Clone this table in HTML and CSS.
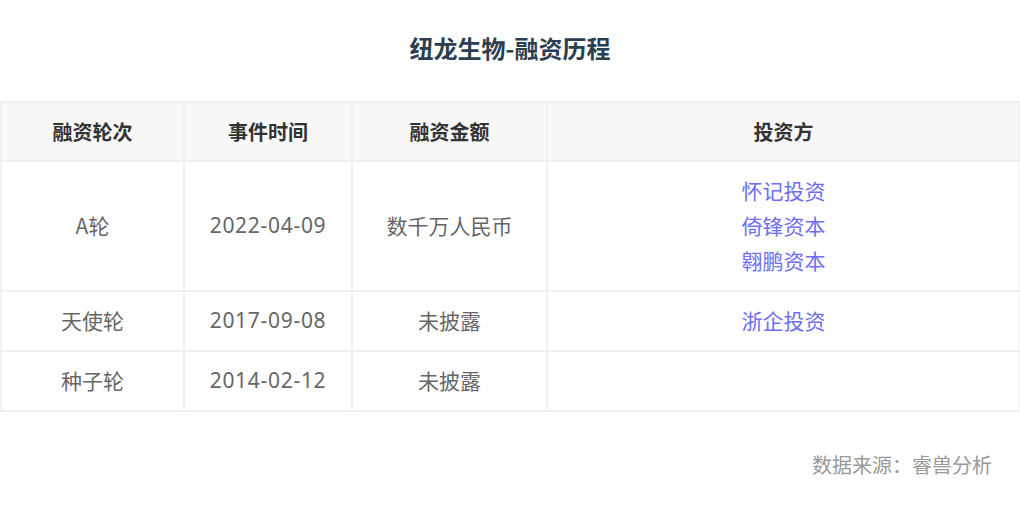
FILE: index.html
```html
<!DOCTYPE html>
<html lang="zh">
<head>
<meta charset="utf-8">
<link rel="stylesheet" href="styles.css">
</head>
<body>
<div class="page">
  <h1 class="title">纽龙生物-融资历程</h1>
  <table class="grid">
    <colgroup>
      <col class="c1"><col class="c2"><col class="c3"><col class="c4">
    </colgroup>
    <thead>
      <tr><th>融资轮次</th><th>事件时间</th><th>融资金额</th><th>投资方</th></tr>
    </thead>
    <tbody>
      <tr>
        <td>A轮</td><td class="num">2022-04-09</td><td>数千万人民币</td>
        <td><div class="inv">怀记投资</div><div class="inv">倚锋资本</div><div class="inv">翱鹏资本</div></td>
      </tr>
      <tr>
        <td>天使轮</td><td class="num">2017-09-08</td><td>未披露</td>
        <td><div class="inv">浙企投资</div></td>
      </tr>
      <tr>
        <td>种子轮</td><td class="num">2014-02-12</td><td>未披露</td>
        <td></td>
      </tr>
    </tbody>
  </table>
  <div class="source">数据来源：睿兽分析</div>
</div>
</body>
</html>
```

FILE: styles.css
```css
html, body {
  margin: 0;
  padding: 0;
  background: #ffffff;
}
body {
  font-family: "Noto Sans CJK SC", "Noto Sans", sans-serif;
}
.page {
  width: 1020px;
  height: 520px;
}
.title {
  margin: 0;
  padding-top: 32px;
  height: 70px;
  box-sizing: border-box;
  text-align: center;
  font-size: 24px;
  line-height: 32px;
  font-weight: 700;
  color: #2c3e50;
}
.grid {
  margin-top: 31px;
  width: 1019px;
  border-collapse: collapse;
  table-layout: fixed;
}
.c1 { width: 183px; }
.c2 { width: 168px; }
.c3 { width: 195px; }
.c4 { width: 473px; }
.grid th, .grid td {
  border: 2px solid #eef0f6;
  text-align: center;
  vertical-align: middle;
  padding: 11px 0 12px;
  font-size: 21px;
  line-height: 35px;
}
.grid th {
  background: #f8f8f8;
  color: #333333;
  font-weight: 700;
  font-size: 20px;
  height: 33px;
  padding: 11px 0;
}
.grid td {
  color: #666666;
  height: 35px;
}
.grid td.num {
  font-family: "Noto Sans", sans-serif;
  letter-spacing: 0.7px;
}
.grid td .inv {
  color: #6e6ef5;
}
.source {
  margin-top: 39px;
  padding-right: 28px;
  text-align: right;
  font-size: 20px;
  line-height: 28px;
  color: #999999;
}
```
